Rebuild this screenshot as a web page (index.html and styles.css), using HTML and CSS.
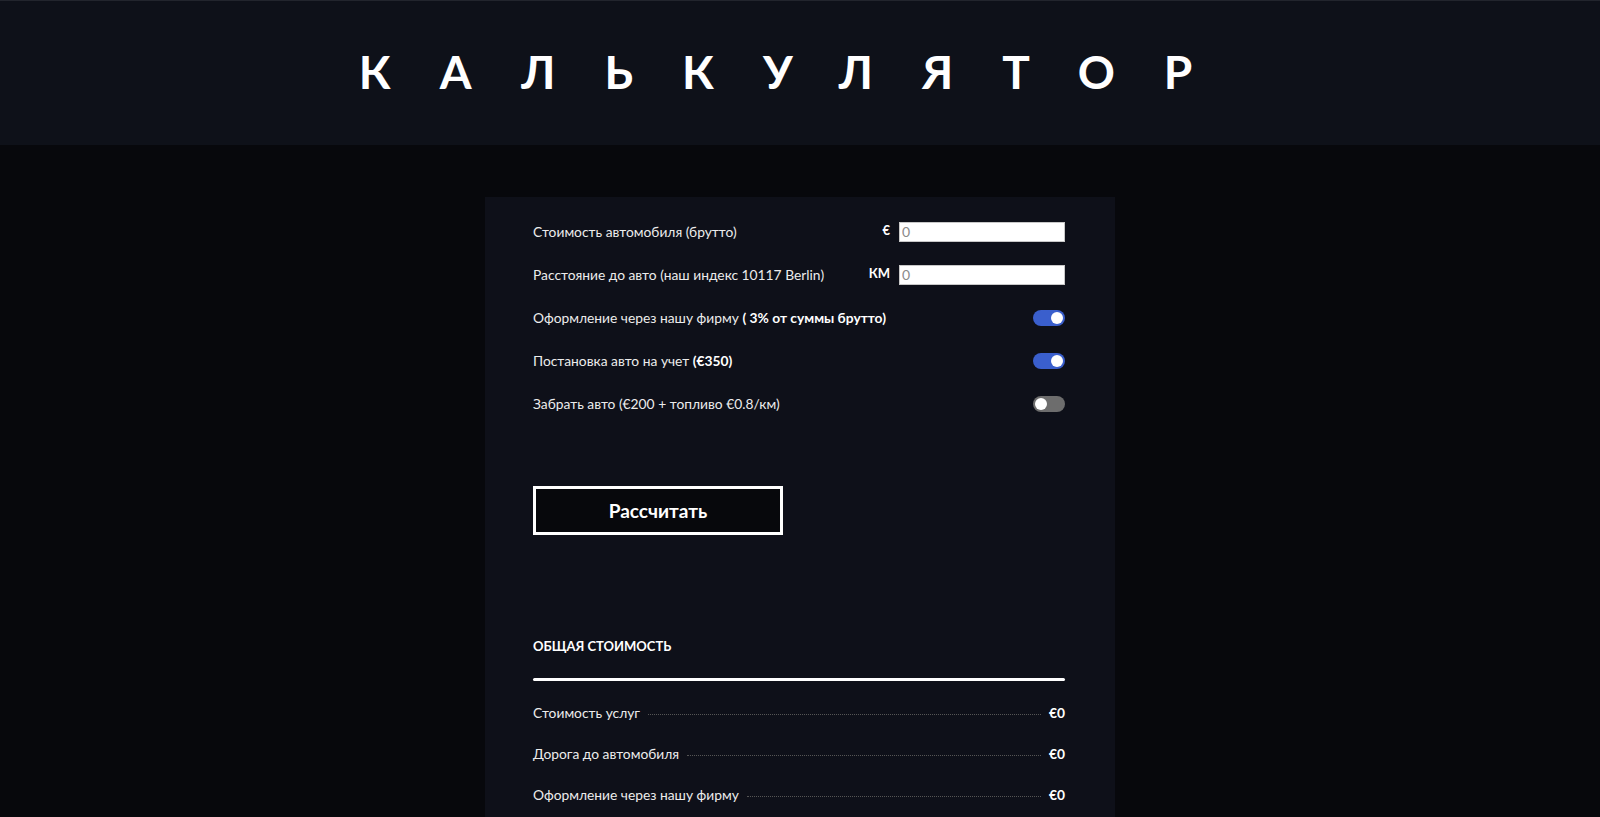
FILE: index.html
```html
<!DOCTYPE html>
<html lang="ru">
<head>
  <meta charset="UTF-8" />
  <meta name="viewport" content="width=device-width, initial-scale=1.0" />
  <title>Калькулятор</title>
  <link rel="stylesheet" href="styles.css">
</head>
<body>

  <header class="page-header">
    <h1>Калькулятор</h1>
  </header>

  <main class="calc-card">
    <form id="calcForm" class="calc-form">
      <div class="calc-row">
        <span class="calc-label">Стоимость автомобиля (брутто)</span>
        <div class="calc-field">
          <span class="unit">€</span>
          <input type="number" name="price" placeholder="0" />
        </div>
      </div>
      <div class="calc-row">
        <span class="calc-label">Расстояние до авто (наш индекс 10117 Berlin)</span>
        <div class="calc-field">
          <span class="unit">КМ</span>
          <input type="number" name="distance" placeholder="0" />
        </div>
      </div>
      <div class="calc-row">
        <span class="calc-label">Оформление через нашу фирму <strong>( 3% от суммы брутто)</strong></span>
        <label class="switch">
          <input type="checkbox" name="company" checked />
          <span class="slider"></span>
        </label>
      </div>
      <div class="calc-row">
        <span class="calc-label">Постановка авто на учет <strong>(€350)</strong></span>
        <label class="switch">
          <input type="checkbox" name="register" checked />
          <span class="slider"></span>
        </label>
      </div>
      <div class="calc-row">
        <span class="calc-label">Забрать авто (€200 + топливо €0.8/км)</span>
        <label class="switch">
          <input type="checkbox" name="pickup" />
          <span class="slider"></span>
        </label>
      </div>

      <button type="submit" class="calc-btn">Рассчитать</button>
    </form>

    <section class="totals">
      <h3>Общая стоимость</h3>
      <div class="totals-line"></div>
      <div class="total-row"><span>Стоимость услуг</span><i></i><b id="servicesSum">€0</b></div>
      <div class="total-row"><span>Дорога до автомобиля</span><i></i><b id="roadSum">€0</b></div>
      <div class="total-row"><span>Оформление через нашу фирму</span><i></i><b id="companySum">€0</b></div>
      <div class="total-row"><span>Постановка авто на учет</span><i></i><b id="registerSum">€0</b></div>
      <div class="total-row"><span>Итого</span><i></i><b id="totalSum">€0</b></div>
    </section>
  </main>

  <script>
    const form = document.getElementById('calcForm');

    form.addEventListener('submit', function(e) {
      e.preventDefault();

      const price = parseFloat(form.elements['price'].value) || 0;
      const km = parseFloat(form.elements['distance'].value) || 0;

      const company = form.elements['company'].checked ? price * 0.03 : 0;
      const register = form.elements['register'].checked ? 350 : 0;
      const road = form.elements['pickup'].checked ? 200 + km * 0.8 : 0;
      const services = company + register;

      const fmt = v => '€' + Math.round(v);
      document.getElementById('servicesSum').textContent = fmt(services);
      document.getElementById('roadSum').textContent = fmt(road);
      document.getElementById('companySum').textContent = fmt(company);
      document.getElementById('registerSum').textContent = fmt(register);
      document.getElementById('totalSum').textContent = fmt(price + services + road);
    });
  </script>

</body>
</html>
```

FILE: styles.css
```css
body {
  font-family: 'Lato', 'Noto Sans', sans-serif;
  background-color: #07080c;
  color: #ececec;
  margin: 0;
  padding: 0;
}

.page-header {
  height: 145px;
  background-color: #0e1119;
  border-top: 1px solid #22252d;
  box-sizing: border-box;
  display: flex;
  align-items: center;
  justify-content: center;
}

.page-header h1 {
  margin: 0 0 4px 0;
  font-size: 46px;
  font-weight: 700;
  text-transform: uppercase;
  letter-spacing: 49px;
  color: #fff;
}

.calc-card {
  width: 630px;
  margin: 52px auto 0;
  background-color: #0e1019;
  padding: 13px 50px 60px 48px;
  box-sizing: border-box;
}

.calc-row {
  display: flex;
  align-items: center;
  justify-content: space-between;
  height: 43px;
  font-size: 13.8px;
}

.calc-label strong {
  font-weight: 700;
  color: #fff;
}

.calc-field {
  display: flex;
  align-items: center;
  gap: 9px;
}

.unit {
  font-weight: 700;
  font-size: 13px;
  color: #fff;
  margin-top: -4px;
}

.calc-field input {
  width: 166px;
  height: 20px;
  box-sizing: border-box;
  border: 1px solid #c8c8c8;
  background: #fff;
  padding: 0 2px;
  font-family: inherit;
  font-size: 14px;
  color: #333;
}

.calc-field input::placeholder {
  color: #8a8a8a;
}

.switch {
  position: relative;
  width: 32px;
  height: 16px;
  cursor: pointer;
}

.switch input {
  display: none;
}

.slider {
  position: absolute;
  inset: 0;
  background-color: #6d6d6d;
  border-radius: 8px;
}

.slider::before {
  content: '';
  position: absolute;
  left: 2px;
  top: 2px;
  width: 12px;
  height: 12px;
  border-radius: 50%;
  background: #fff;
  transition: left 0.2s ease;
}

.switch input:checked + .slider {
  background-color: #3a5fcd;
}

.switch input:checked + .slider::before {
  left: 18px;
}

.calc-btn {
  display: block;
  margin-top: 61px;
  width: 250px;
  height: 49px;
  background-color: #07080c;
  border: 3px solid #fff;
  color: #fff;
  font-family: inherit;
  font-size: 19px;
  font-weight: 700;
  cursor: pointer;
}

.totals {
  margin-top: 103px;
}

.totals h3 {
  margin: 0;
  font-size: 13px;
  font-weight: 700;
  text-transform: uppercase;
  color: #fff;
}

.totals-line {
  height: 3px;
  border-radius: 2px;
  background: #fff;
  margin: 24px 0 11px;
}

.total-row {
  display: flex;
  align-items: center;
  height: 41px;
  font-size: 13.8px;
}

.total-row i {
  flex: 1;
  border-bottom: 1px dotted #555;
  margin: 4px 8px 0;
}

.total-row b {
  color: #fff;
  font-weight: 700;
}
```
